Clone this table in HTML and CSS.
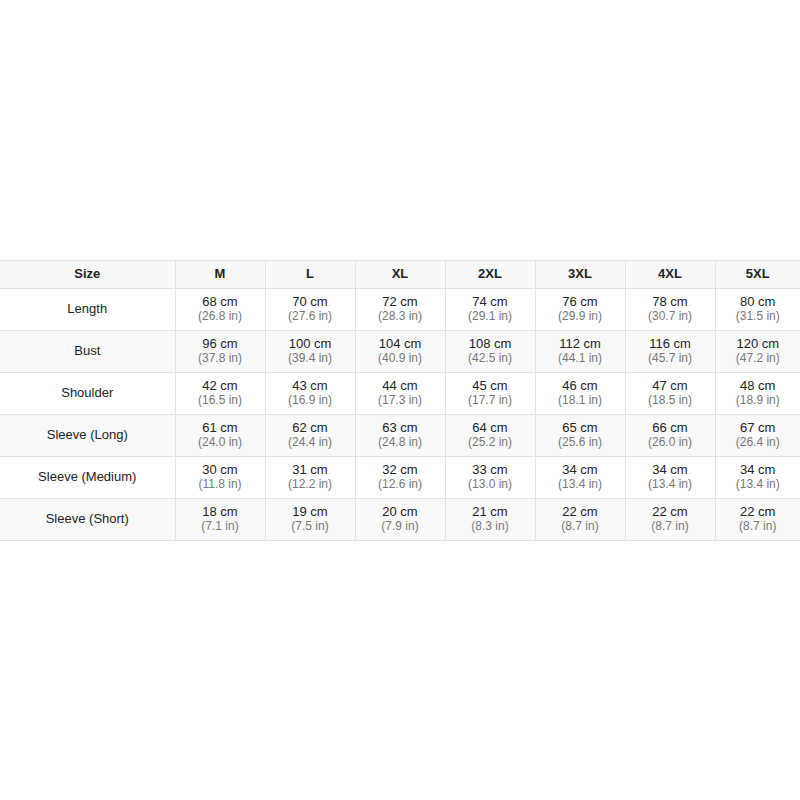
FILE: index.html
```html
<!DOCTYPE html>
<html>
<head>
<meta charset="utf-8">
<link rel="stylesheet" href="styles.css">
</head>
<body>
<div class="wrap">
<table class="sizes">
<colgroup>
<col class="c-label"><col class="c-size"><col class="c-size"><col class="c-size"><col class="c-size"><col class="c-size"><col class="c-size"><col class="c-last">
</colgroup>
<thead>
<tr><th>Size</th><th>M</th><th>L</th><th>XL</th><th>2XL</th><th>3XL</th><th>4XL</th><th>5XL</th></tr>
</thead>
<tbody>
<tr><td class="label">Length</td>
<td>68 cm<span class="in">(26.8 in)</span></td>
<td>70 cm<span class="in">(27.6 in)</span></td>
<td>72 cm<span class="in">(28.3 in)</span></td>
<td>74 cm<span class="in">(29.1 in)</span></td>
<td>76 cm<span class="in">(29.9 in)</span></td>
<td>78 cm<span class="in">(30.7 in)</span></td>
<td>80 cm<span class="in">(31.5 in)</span></td></tr>
<tr><td class="label">Bust</td>
<td>96 cm<span class="in">(37.8 in)</span></td>
<td>100 cm<span class="in">(39.4 in)</span></td>
<td>104 cm<span class="in">(40.9 in)</span></td>
<td>108 cm<span class="in">(42.5 in)</span></td>
<td>112 cm<span class="in">(44.1 in)</span></td>
<td>116 cm<span class="in">(45.7 in)</span></td>
<td>120 cm<span class="in">(47.2 in)</span></td></tr>
<tr><td class="label">Shoulder</td>
<td>42 cm<span class="in">(16.5 in)</span></td>
<td>43 cm<span class="in">(16.9 in)</span></td>
<td>44 cm<span class="in">(17.3 in)</span></td>
<td>45 cm<span class="in">(17.7 in)</span></td>
<td>46 cm<span class="in">(18.1 in)</span></td>
<td>47 cm<span class="in">(18.5 in)</span></td>
<td>48 cm<span class="in">(18.9 in)</span></td></tr>
<tr><td class="label">Sleeve (Long)</td>
<td>61 cm<span class="in">(24.0 in)</span></td>
<td>62 cm<span class="in">(24.4 in)</span></td>
<td>63 cm<span class="in">(24.8 in)</span></td>
<td>64 cm<span class="in">(25.2 in)</span></td>
<td>65 cm<span class="in">(25.6 in)</span></td>
<td>66 cm<span class="in">(26.0 in)</span></td>
<td>67 cm<span class="in">(26.4 in)</span></td></tr>
<tr><td class="label">Sleeve (Medium)</td>
<td>30 cm<span class="in">(11.8 in)</span></td>
<td>31 cm<span class="in">(12.2 in)</span></td>
<td>32 cm<span class="in">(12.6 in)</span></td>
<td>33 cm<span class="in">(13.0 in)</span></td>
<td>34 cm<span class="in">(13.4 in)</span></td>
<td>34 cm<span class="in">(13.4 in)</span></td>
<td>34 cm<span class="in">(13.4 in)</span></td></tr>
<tr><td class="label">Sleeve (Short)</td>
<td>18 cm<span class="in">(7.1 in)</span></td>
<td>19 cm<span class="in">(7.5 in)</span></td>
<td>20 cm<span class="in">(7.9 in)</span></td>
<td>21 cm<span class="in">(8.3 in)</span></td>
<td>22 cm<span class="in">(8.7 in)</span></td>
<td>22 cm<span class="in">(8.7 in)</span></td>
<td>22 cm<span class="in">(8.7 in)</span></td></tr>
</tbody>
</table>
</div>
</body>
</html>
```
FILE: styles.css
```css
html, body {
  margin: 0;
  padding: 0;
  background: #ffffff;
}
.wrap {
  height: 800px;
  display: flex;
  align-items: center;
}
.sizes {
  width: 800px;
  table-layout: fixed;
  border-collapse: collapse;
  font-family: "Liberation Sans", Arial, sans-serif;
  color: #222222;
}
.c-label { width: 175px; }
.c-size { width: 90px; }
.c-last { width: 85px; }
.sizes th, .sizes td {
  border: 1px solid #e2e2e2;
  text-align: center;
  vertical-align: middle;
  padding: 0;
}
.sizes tr > :first-child { border-left: none; }
.sizes tr > :last-child { border-right: none; }
.sizes th {
  height: 25px;
  background: #f8f8f8;
  font-size: 13px;
  font-weight: bold;
  padding-bottom: 2px;
}
.sizes td {
  height: 40px;
  font-size: 13px;
  line-height: 15px;
  padding-bottom: 1px;
}
.sizes tbody tr:nth-child(even) td { background: #f9f9f9; }
.in {
  display: block;
  font-size: 12px;
  line-height: 14px;
  color: #777777;
}
```
